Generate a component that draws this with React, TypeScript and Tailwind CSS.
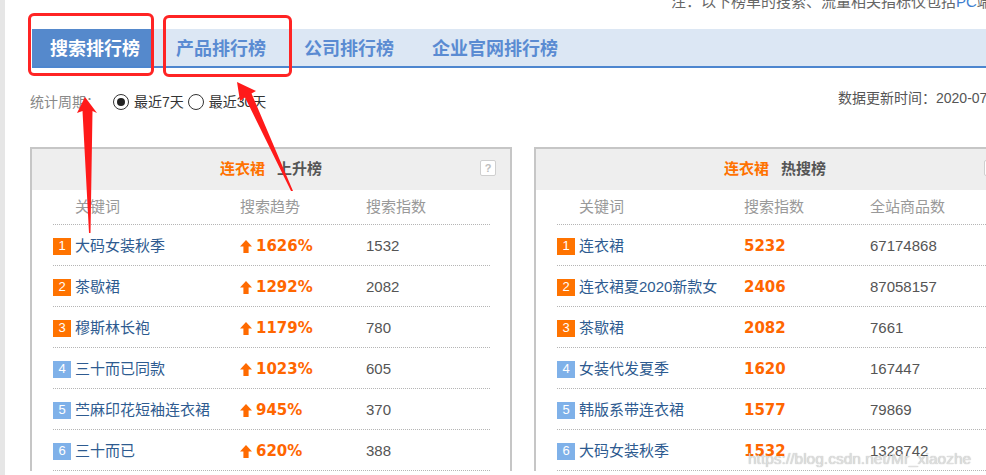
import React from "react";

const leftRows = [
  { k: "大码女装秋季", v: "1626%", n: "1532" },
  { k: "茶歇裙", v: "1292%", n: "2082" },
  { k: "穆斯林长袍", v: "1179%", n: "780" },
  { k: "三十而已同款", v: "1023%", n: "605" },
  { k: "苎麻印花短袖连衣裙", v: "945%", n: "370" },
  { k: "三十而已", v: "620%", n: "388" },
];

const rightRows = [
  { k: "连衣裙", v: "5232", n: "67174868" },
  { k: "连衣裙夏2020新款女", v: "2406", n: "87058157" },
  { k: "茶歇裙", v: "2082", n: "7661" },
  { k: "女装代发夏季", v: "1620", n: "167447" },
  { k: "韩版系带连衣裙", v: "1577", n: "79869" },
  { k: "大码女装秋季", v: "1532", n: "1328742" },
];

function UpArrow() {
  return (
    <svg width="12" height="13" viewBox="0 0 12 13" className="mr-[4px] shrink-0">
      <polygon points="6,0 12,6.5 8.6,6.5 8.6,13 3.4,13 3.4,6.5 0,6.5" fill="#ff6a00" />
    </svg>
  );
}

function Panel({
  title,
  cols,
  rows,
  trend,
}: {
  title: string;
  cols: [string, string, string];
  rows: { k: string; v: string; n: string }[];
  trend: boolean;
}) {
  return (
    <div className="w-[482px] shrink-0 border-2 border-b-0 border-[#c6c6c6] bg-white">
      <div className="relative h-[41px] bg-[#eeeeee] flex items-center justify-center">
        <span className="text-[15px] font-bold text-[#ff7200]">连衣裙</span>
        <span className="ml-[12px] text-[15px] font-bold text-[#555555]">{title}</span>
        <div className="absolute right-[14px] top-[11px] w-[16px] h-[16px] rounded-[2px] border border-[#cfcfcf] bg-white flex items-center justify-center text-[11px] font-bold leading-none text-[#bdbdbd]">
          ?
        </div>
      </div>
      <div className="ml-[21px] mr-[20px]">
        <div className="h-[35px] flex items-center border-b border-dotted border-[#b5b5b5] text-[15px] text-[#999999]">
          <div className="w-[187px] pl-[22px]">{cols[0]}</div>
          <div className="w-[126px]">{cols[1]}</div>
          <div>{cols[2]}</div>
        </div>
        {rows.map((r, i) => (
          <div
            key={i}
            className="h-[41px] pt-[2px] flex items-center border-b border-dotted border-[#b5b5b5]"
          >
            <div className="w-[187px] flex items-center overflow-hidden whitespace-nowrap">
              <span
                className={
                  "w-[18px] h-[17px] shrink-0 flex items-center justify-center text-[13px] text-white " +
                  (i < 3 ? "bg-[#ff7300]" : "bg-[#7fb1e9]")
                }
              >
                {i + 1}
              </span>
              <span className="ml-[4px] text-[15px] text-[#2e5b90]">{r.k}</span>
            </div>
            <div className="w-[126px] flex items-center">
              {trend && <UpArrow />}
              <span className="font-['DejaVu_Sans',sans-serif] font-bold text-[15px] text-[#ff6600]">
                {r.v}
              </span>
            </div>
            <div className="text-[15px] text-[#555555]">{r.n}</div>
          </div>
        ))}
      </div>
    </div>
  );
}

export default function App() {
  return (
    <div className="relative w-[986px] h-[475px] overflow-hidden bg-white flex font-['Liberation_Sans','Noto_Sans_CJK_SC',sans-serif]">
      <div className="w-[5px] shrink-0 bg-[#e6e6e6]" />
      <div className="w-[981px] shrink-0 overflow-hidden">
        <div className="h-[29px] pl-[666px] overflow-hidden whitespace-nowrap">
          <div className="-mt-[8px] text-[15px] leading-[20px] text-[#666666]">
            注：以下榜单的搜索、流量相关指标仅包括<span className="text-[#3f7fd0]">PC</span>端
          </div>
        </div>
        <div className="ml-[27px] h-[39px] bg-[#dce7f4] border-b-2 border-[#4d86cf] flex items-stretch whitespace-nowrap">
          <div className="w-[121px] bg-[#5589cc] flex items-center pt-[3px] pl-[18px] text-[18px] font-bold text-white">
            搜索排行榜
          </div>
          <div className="ml-[23px] pt-[3px] flex items-center text-[18px] font-bold text-[#5a8bd2]">产品排行榜</div>
          <div className="ml-[38px] pt-[3px] flex items-center text-[18px] font-bold text-[#5a8bd2]">公司排行榜</div>
          <div className="ml-[38px] pt-[3px] flex items-center text-[18px] font-bold text-[#5a8bd2]">企业官网排行榜</div>
        </div>
        <div className="h-[79px] flex items-start justify-between pt-[24px] whitespace-nowrap">
          <div className="pl-[25px] h-[20px] flex items-center text-[14px]">
            <span className="text-[#888888]">统计周期：</span>
            <span className="ml-[13px] w-[16px] h-[16px] rounded-full border-[1.5px] border-[#333333] flex items-center justify-center">
              <span className="w-[8px] h-[8px] rounded-full bg-[#222222]" />
            </span>
            <span className="ml-[5px] text-[#333333]">最近7天</span>
            <span className="ml-[4px] w-[16px] h-[16px] rounded-full border-[1.5px] border-[#333333]" />
            <span className="ml-[5px] text-[#333333]">最近30天</span>
          </div>
          <div className="-mt-[4px] h-[20px] flex items-center text-[14px] text-[#555555] overflow-hidden w-[148px]">
            数据更新时间：2020-07-28
          </div>
        </div>
        <div className="ml-[25px] flex gap-[22px] w-max">
          <Panel title="上升榜" cols={["关键词", "搜索趋势", "搜索指数"]} rows={leftRows} trend />
          <Panel title="热搜榜" cols={["关键词", "搜索指数", "全站商品数"]} rows={rightRows} trend={false} />
        </div>
      </div>

      <div className="absolute left-[28px] top-[13px] w-[126px] h-[63px] border-[3px] border-[#ff2424] rounded-[6px] pointer-events-none" />
      <div className="absolute left-[163px] top-[15px] w-[129px] h-[62px] border-[3px] border-[#ff2424] rounded-[6px] pointer-events-none" />

      <svg className="absolute left-0 top-0 pointer-events-none" width="986" height="475" viewBox="0 0 986 475">
        <polygon points="85,97 97,113 92.5,111 90.5,233 89,233 82.5,111 77,113" fill="#ff1a1a" />
        <polygon points="237,82 256,91 251.5,93.5 293,191 291,191 245,97.5 240,101" fill="#ff1a1a" />
      </svg>

      <div className="absolute left-[748px] top-[447px] text-[15.5px] text-[#dcdcdc] opacity-90 whitespace-nowrap pointer-events-none [text-shadow:0_0_1px_rgba(0,0,0,0.35)]">
        https://blog.csdn.net/Mr_xiaozhe
      </div>
    </div>
  );
}
